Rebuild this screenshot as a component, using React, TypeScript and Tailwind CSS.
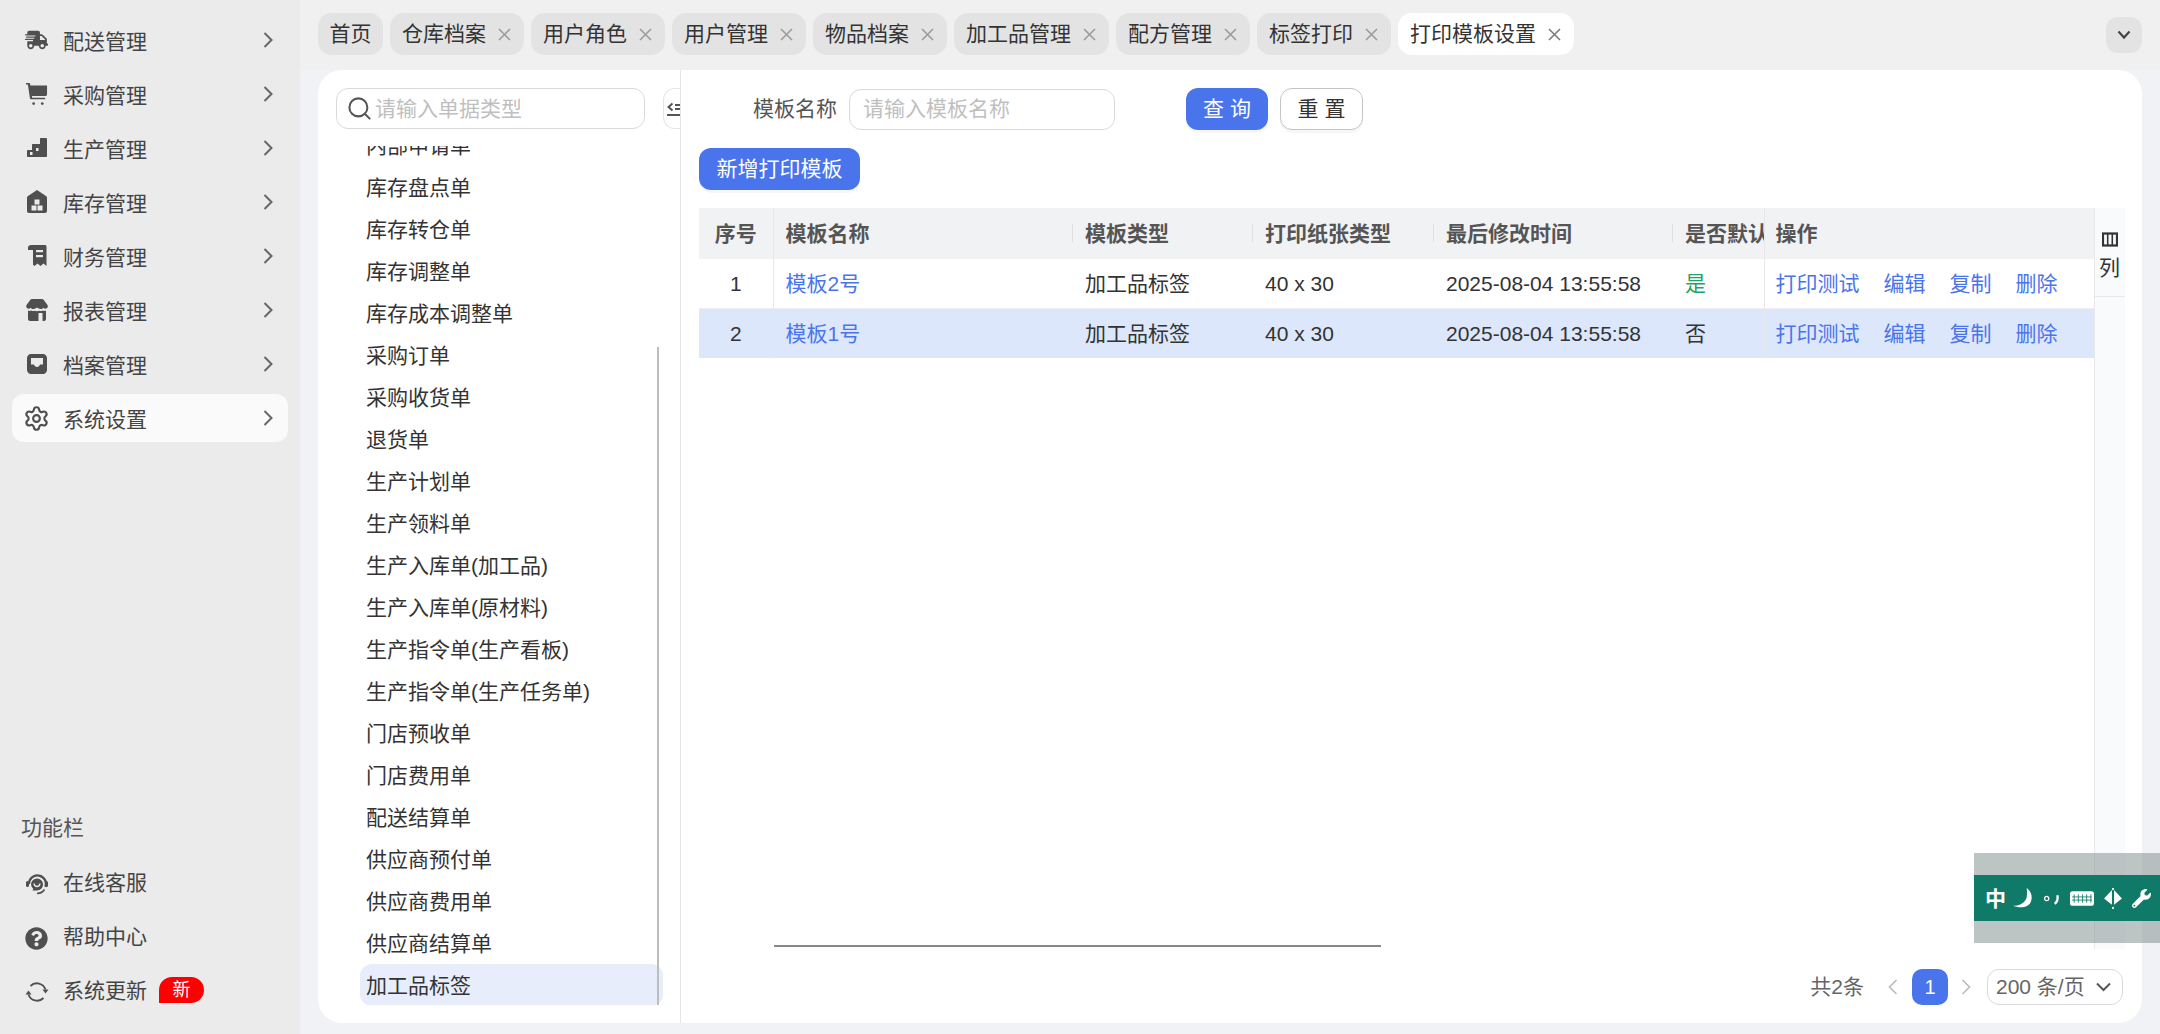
import React from 'react';
import { Search, Settings } from 'lucide-react';
import { FaShippingFast, FaQuestionCircle, FaWrench } from 'react-icons/fa';

const Chevron: React.FC = () => (
  <svg width="10" height="16" viewBox="0 0 10 16" fill="none" stroke="#666" strokeWidth="2">
    <path d="M1.5 1 8.5 8 1.5 15" />
  </svg>
);

const CloseX: React.FC<{ active?: boolean }> = ({ active }) => (
  <svg width="13" height="13" viewBox="0 0 13 13" fill="none" stroke={active ? '#777' : '#999'} strokeWidth="1.5">
    <path d="M1 1 12 12M12 1 1 12" />
  </svg>
);

const CartIcon = () => (
  <svg width="24" height="24" viewBox="0 0 24 24" fill="#4f4f4f">
    <path d="M1 0.5h3.2c.6 0 1 .4 1.1.9L5.6 3H23v9.5c0 .8-.6 1.5-1.4 1.5H7.2l.3 2H21v1.6H6.2c-.5 0-.9-.4-1-.9L3 2.2H1z" />
    <circle cx="9" cy="22" r="1.4" />
    <circle cx="18" cy="22" r="1.4" />
  </svg>
);

const StairsIcon = () => (
  <svg width="22" height="22" viewBox="0 0 22 22" fill="#4f4f4f">
    <path d="M15 1h5c.6 0 1 .4 1 1v17c0 .6-.4 1-1 1H2c-.6 0-1-.4-1-1v-5c0-.6.4-1 1-1h4V8c0-.6.4-1 1-1h7V2c0-.6.4-1 1-1z" />
    <rect x="4" y="15" width="2.5" height="3" fill="#ebebeb" />
    <rect x="10" y="11" width="2.5" height="3" fill="#ebebeb" />
  </svg>
);

const WarehouseIcon = () => (
  <svg width="22" height="24" viewBox="0 0 22 24" fill="#4f4f4f">
    <path d="M11 0 20 6c.7.4 1 1 1 1.8V21c0 1.2-.8 2-2 2H3c-1.200 0-2-.8-2-2V7.800C1 7 1.300 6.400 2 6z" />
    <rect x="8.500" y="9.500" width="5" height="5" fill="#ebebeb" />
    <rect x="5.500" y="15.500" width="5" height="5" fill="#ebebeb" />
    <rect x="11.500" y="15.500" width="5" height="5" fill="#ebebeb" />
  </svg>
);

const ReceiptIcon = () => (
  <svg width="22" height="24" viewBox="0 0 22 24" fill="#4f4f4f">
    <path d="M6 1h13c.8 0 1.500.7 1.500 1.500V22l-3-2.500-3 2.500-3-2.500-3 2.500-1.500-1.200V6H2V3.500C2 2 3.500 1 5 1z" />
    <rect x="10" y="6" width="7" height="2.200" fill="#ebebeb" />
    <rect x="10" y="11" width="7" height="2.200" fill="#ebebeb" />
  </svg>
);

const StoreIcon = () => (
  <svg width="22" height="24" viewBox="0 0 22 24" fill="#4f4f4f">
    <path d="M6 1h10c.6 0 1 .2 1.400.6L21.500 7c.6 1 .4 2-.2 2.800-1 1.200-3 1.200-4 0-.5.800-1.400 1.200-2.300 1.200s-2.200-.4-4-1.500c-1.800 1.100-3.100 1.500-4 1.500s-1.800-.4-2.300-1.200c-1 1.200-3 1.200-4 0C.1 9 0 8 .5 7L4.600 1.600C5 1.200 5.400 1 6 1z" />
    <path d="M2 12.500c1 .5 2.200.5 3.200 0 1 .6 2.500.8 3.800.2 1.300.6 2.700.6 4 0 1.300.6 2.800.4 3.800-.2 1 .5 2.200.5 3.200 0V21c0 1.100-.9 2-2 2H4c-1.100 0-2-.9-2-2z" />
    <rect x="12.500" y="15" width="4" height="8" fill="#ebebeb" />
  </svg>
);

const InboxIcon = () => (
  <svg width="22" height="22" viewBox="0 0 22 22" fill="#4f4f4f">
    <path d="M5 1h12c2.200 0 4 1.800 4 4v12c0 2.200-1.800 4-4 4H5c-2.200 0-4-1.800-4-4V5c0-2.200 1.800-4 4-4z" />
    <path d="M5 5h12v6.500h-3c-.4 1.600-1.600 2.500-3 2.500s-2.600-.9-3-2.500H5z" fill="#ebebeb" />
  </svg>
);

const HeadsetIcon = () => (
  <svg width="26" height="24" viewBox="0 0 26 24" fill="none" stroke="#4f4f4f">
    <path d="M5 12a8.500 8.500 0 1 1 16.500 2.800" strokeWidth="2.200" />
    <path d="M20.500 17.500c-1.500 2.500-4 3.800-7.500 4" strokeWidth="1.600" />
    <rect x="2" y="9" width="3" height="6" rx="1.500" fill="#4f4f4f" stroke="none" />
    <rect x="21" y="9" width="3" height="6" rx="1.500" fill="#4f4f4f" stroke="none" />
    <path d="M7 12.500a6 6 0 1 1 6 6H8.500l.8-1.800A6 6 0 0 1 7 12.500z" fill="#4f4f4f" stroke="none" />
    <path d="M10 11.500c.3 2 1.500 3 3 3s2.700-1 3-3" stroke="#ebebeb" strokeWidth="1.500" />
  </svg>
);

const UpdateIcon = () => (
  <svg width="26" height="24" viewBox="0 0 26 24" fill="none" stroke="#4f4f4f" strokeWidth="1.800">
    <path d="M6.500 6A9 9 0 0 1 21.500 9.500" />
    <path d="M19.500 18A9 9 0 0 1 4.500 14.500" />
    <path d="M18.500 9.500h6L21.500 13.500z" fill="#4f4f4f" stroke="none" />
    <path d="M1.500 14.500h6L4.500 10.500z" fill="#4f4f4f" stroke="none" />
  </svg>
);

const menus: { label: string; icon: React.ReactNode; active?: boolean }[] = [
  { label: '配送管理', icon: <FaShippingFast size={24} color="#4f4f4f" /> },
  { label: '采购管理', icon: <CartIcon /> },
  { label: '生产管理', icon: <StairsIcon /> },
  { label: '库存管理', icon: <WarehouseIcon /> },
  { label: '财务管理', icon: <ReceiptIcon /> },
  { label: '报表管理', icon: <StoreIcon /> },
  { label: '档案管理', icon: <InboxIcon /> },
  { label: '系统设置', icon: <Settings size={27} color="#4f4f4f" strokeWidth={1.9} className="shrink-0" />, active: true },
];

const tabs = ['仓库档案', '用户角色', '用户管理', '物品档案', '加工品管理', '配方管理', '标签打印'];

const billTypes = [
  '内部申请单',
  '库存盘点单',
  '库存转仓单',
  '库存调整单',
  '库存成本调整单',
  '采购订单',
  '采购收货单',
  '退货单',
  '生产计划单',
  '生产领料单',
  '生产入库单(加工品)',
  '生产入库单(原材料)',
  '生产指令单(生产看板)',
  '生产指令单(生产任务单)',
  '门店预收单',
  '门店费用单',
  '配送结算单',
  '供应商预付单',
  '供应商费用单',
  '供应商结算单',
  '加工品标签',
];

const rows = [
  { no: 1, name: '模板2号', isDefault: '是', selected: false },
  { no: 2, name: '模板1号', isDefault: '否', selected: true },
];

const headSep = "relative after:absolute after:right-0 after:top-[16px] after:h-[18px] after:w-px after:bg-[#dfdfdf]";

const App: React.FC = () => {
  return (
    <div className="relative flex h-[1034px] w-[2160px] overflow-hidden bg-[#f0f2f5] font-['Liberation_Sans','Noto_Sans_CJK_SC',sans-serif] text-[21px] text-[#333]">
      <aside className="flex w-[300px] shrink-0 flex-col justify-between bg-[#ebebeb] px-3 pb-[18px] pt-4 text-[#444]">
        <nav className="flex flex-col gap-[6px]">
          {menus.map((m) => (
            <div
              key={m.label}
              className={`flex h-[48px] items-center justify-between rounded-xl pl-[13px] pr-[15px] ${m.active ? 'bg-[#fafafa]' : ''}`}
            >
              <span className="flex items-center gap-[15px]">
                <span className="flex w-[23px] items-center justify-center">{m.icon}</span>
                <span className="pt-[3px]">{m.label}</span>
              </span>
              <Chevron />
            </div>
          ))}
        </nav>
        <div className="flex flex-col">
          <div className="mb-4 h-[30px] pl-[9px] text-[#555] leading-[28px]">功能栏</div>
          <div className="flex flex-col gap-[6px]">
            <div className="flex h-[48px] items-center gap-[13px] pl-[12px]">
              <HeadsetIcon />
              <span className="-mt-[2px]">在线客服</span>
            </div>
            <div className="flex h-[48px] items-center gap-[15px] pl-[13px]">
              <FaQuestionCircle size={23} color="#4f4f4f" />
              <span className="-mt-[2px]">帮助中心</span>
            </div>
            <div className="flex h-[48px] items-center gap-[13px] pl-[12px]">
              <UpdateIcon />
              <span className="-mt-[2px]">系统更新</span>
              <span className="-ml-[1px] -mt-[4px] flex h-[26px] w-[45px] items-center justify-center rounded-[13px] rounded-bl-none bg-[#ff0000] text-[18px] leading-none text-white">
                新
              </span>
            </div>
          </div>
        </div>
      </aside>

      <main className="flex min-w-0 flex-1 flex-col">
        <div className="flex h-[70px] shrink-0 bg-[#f0f0f0] pl-[18px] pr-[18px]">
          <div className="flex gap-[7px] pt-[13px]">
            <div className="flex h-[42px] w-[65px] items-center justify-center rounded-[14px] bg-[#e3e3e3]">首页</div>
            {tabs.map((t) => (
              <div key={t} className="flex h-[42px] items-center gap-[12px] rounded-[14px] bg-[#e3e3e3] pl-3 pr-[13px]">
                {t}
                <CloseX />
              </div>
            ))}
            <div className="flex h-[42px] items-center gap-[12px] rounded-[14px] bg-white pl-3 pr-[13px]">
              打印模板设置
              <CloseX active />
            </div>
          </div>
          <div className="ml-auto mt-[17px] flex h-[36px] w-[36px] items-center justify-center rounded-xl bg-[#e3e3e3]">
            <svg width="14" height="10" viewBox="0 0 14 10" fill="none" stroke="#444" strokeWidth="2.200">
              <path d="M1.500 1.500 7 7.500l5.500-6" />
            </svg>
          </div>
        </div>

        <div className="flex-1 px-[18px] pb-[11px]">
          <div className="flex h-full overflow-hidden rounded-[24px] bg-white">
            <section className="relative flex w-[363px] shrink-0 flex-col border-r border-[#e5e5e5] pt-[18px]">
              <div className="mx-[18px] flex h-[41px] w-[309px] items-center gap-[2px] rounded-xl border border-[#d9d9d9] pl-[9px]">
                <Search size={27} color="#555" strokeWidth={1.8} className="shrink-0" />
                <span className="text-[#bfbfbf]">请输入单据类型</span>
              </div>
              <div className="relative mt-[17px] h-[859px] overflow-hidden">
                <ul className="-mt-[22px] ml-[42px] w-[303px]">
                  {billTypes.map((b) => (
                    <li
                      key={b}
                      className={`flex h-[42px] items-center whitespace-nowrap rounded-xl pl-[6px] pt-[1px] ${b === '加工品标签' ? 'bg-[#e8edfb]' : ''}`}
                    >
                      {b}
                    </li>
                  ))}
                </ul>
                <div className="absolute left-[339px] top-[201px] h-[658px] w-[2px] bg-[#bdbdbd]" />
              </div>
              <div className="absolute right-0 top-[18px] flex h-[41px] w-[17px] items-center overflow-hidden rounded-l-xl border-y border-l border-[#e5e5e5] bg-white pl-[3px]">
                <svg width="18" height="18" viewBox="0 0 18 18" fill="none" stroke="#555" className="shrink-0">
                  <path d="M5.500 3.500 1.500 7l4 3.500" strokeWidth="2" />
                  <path d="M8 5h10M8 9h10" strokeWidth="1.800" />
                  <path d="M0 15h18" strokeWidth="2.200" />
                </svg>
              </div>
            </section>

            <section className="relative flex min-w-0 flex-1 flex-col pl-[18px] pr-[19px] pt-[18px]">
              <div className="flex h-[42px] items-center">
                <span className="ml-[54px] text-[#555]">模板名称</span>
                <span className="ml-[12px] flex h-[41px] w-[266px] items-center rounded-xl border border-[#d9d9d9] pl-[13px] text-[#bfbfbf]">
                  请输入模板名称
                </span>
                <button className="ml-[71px] h-[42px] w-[82px] rounded-xl bg-[#4a74ec] text-white shadow-[0_3px_0_rgba(0,0,0,0.03)]">
                  查 询
                </button>
                <button className="ml-[12px] h-[42px] w-[83px] rounded-xl border border-[#c4c4c4] bg-white text-[#333] shadow-[0_3px_0_rgba(0,0,0,0.03)]">
                  重 置
                </button>
              </div>
              <button className="mt-[18px] h-[42px] w-[161px] rounded-xl bg-[#4a74ec] text-white shadow-[0_3px_0_rgba(0,0,0,0.03)]">
                新增打印模板
              </button>

              <div className="mt-[18px] flex h-[741px]">
                <table className="h-fit w-[1395px] table-fixed border-collapse self-start">
                  <colgroup>
                    <col className="w-[74px]" />
                    <col className="w-[300px]" />
                    <col className="w-[180px]" />
                    <col className="w-[181px]" />
                    <col className="w-[239px]" />
                    <col className="w-[91px]" />
                    <col className="w-[330px]" />
                  </colgroup>
                  <thead>
                    <tr className="h-[51px] bg-[#f1f2f4] text-left font-bold text-[#555]">
                      <th className="border-r border-[#e8e8e8] text-center">序号</th>
                      <th className={`px-[12px] ${headSep}`}>模板名称</th>
                      <th className={`px-[12px] ${headSep}`}>模板类型</th>
                      <th className={`px-[12px] ${headSep}`}>打印纸张类型</th>
                      <th className={`px-[12px] ${headSep}`}>最后修改时间</th>
                      <th className="overflow-hidden whitespace-nowrap pl-[12px]">是否默认</th>
                      <th className="border-l border-[#e8e8e8] pl-[11px] pr-3">操作</th>
                    </tr>
                  </thead>
                  <tbody>
                    {rows.map((r) => (
                      <tr key={r.no} className={`${r.no === 1 ? 'h-[49px] border-b border-[#eeeeee]' : 'h-[50px]'} ${r.selected ? 'bg-[#dce7fb]' : ''}`}>
                        <td className="border-r border-[#e8e8e8] text-center">{r.no}</td>
                        <td className="px-[12px] text-[#4a74ec]">{r.name}</td>
                        <td className="px-[12px]">加工品标签</td>
                        <td className="px-[12px]">40 x 30</td>
                        <td className="whitespace-nowrap px-[12px]">2025-08-04 13:55:58</td>
                        <td className={`pl-[12px] ${r.isDefault === '是' ? 'text-[#1fa36a]' : ''}`}>{r.isDefault}</td>
                        <td className="border-l border-[#e8e8e8] pl-[11px] pr-3 text-[#4a74ec]">
                          <span className="flex gap-[24px] whitespace-nowrap">
                            <span>打印测试</span>
                            <span>编辑</span>
                            <span>复制</span>
                            <span>删除</span>
                          </span>
                        </td>
                      </tr>
                    ))}
                  </tbody>
                </table>
                <div className="w-[31px] shrink-0 border-l border-[#e8e8e8] bg-[#f9fafc]">
                  <div className="flex h-[89px] flex-col items-center border-b border-[#e8e8e8] pl-[1px] pr-[2px] pt-[24px]">
                    <svg width="16" height="15" viewBox="0 0 16 15" fill="none" stroke="#333" strokeWidth="2.200">
                      <rect x="1" y="1.500" width="14" height="12" />
                      <path d="M5.700 1.500v12M10.300 1.500v12" strokeWidth="1.600" />
                    </svg>
                    <span className="mt-[7px] leading-[28px]">列</span>
                  </div>
                </div>
              </div>

              <div className="mt-[20px] flex h-[36px] items-center justify-end text-[#666]">
                <span>共2条</span>
                <svg className="ml-[24px]" width="10" height="16" viewBox="0 0 10 16" fill="none" stroke="#bbb" strokeWidth="1.600">
                  <path d="M8.500 1 1.500 8l7 7" />
                </svg>
                <span className="ml-[14px] flex h-[36px] w-[36px] items-center justify-center rounded-[10px] bg-[#4a74ec] text-[20px] text-white">1</span>
                <svg className="ml-[13px]" width="10" height="16" viewBox="0 0 10 16" fill="none" stroke="#bbb" strokeWidth="1.600">
                  <path d="M1.500 1 8.500 8l-7 7" />
                </svg>
                <span className="ml-[16px] flex h-[36px] w-[136px] items-center justify-between rounded-xl border border-[#d9d9d9] pl-2 pr-[11px]">
                  200 条/页
                  <svg width="15" height="10" viewBox="0 0 15 10" fill="none" stroke="#555" strokeWidth="2">
                    <path d="M1 1.500 7.500 8 14 1.500" />
                  </svg>
                </span>
              </div>

              <div className="absolute left-[93px] top-[875px] h-[2px] w-[607px] bg-[#888]" />
            </section>
          </div>
        </div>
      </main>

      <div className="absolute left-[1974px] top-[853px] flex h-[90px] w-[186px] items-center bg-[#7b8a8a]/50">
        <div className="flex h-[46px] w-full items-center bg-[#0f7a68] pl-[11px] text-white">
          <span className="text-[21px] font-bold leading-none">中</span>
          <svg className="ml-[7px]" width="20" height="21" viewBox="0 0 19 20" fill="#fff">
            <path d="M13 0c4 3 6 8 4 13-2 5-9 7-17 4 5 0 11-2 13-8 .5-3 .5-6 0-9z" />
          </svg>
          <svg className="ml-[10px]" width="17" height="15" viewBox="0 0 15 14" fill="none" stroke="#fff">
            <circle cx="3" cy="7" r="2" strokeWidth="1.200" />
            <path d="M13 4c.6 3 0 6-2.500 8" strokeWidth="2.200" />
          </svg>
          <svg className="ml-[10px]" width="24" height="15" viewBox="0 0 23 14" fill="#fff">
            <rect width="23" height="14" rx="2.500" />
            <path d="M4 3v8M8 3v8M12 3v8M16 3v8M20 3v8M2 5.500h19M2 8.500h19" stroke="#0f7a68" strokeWidth="0.800" />
          </svg>
          <svg className="ml-[10px]" width="18" height="21" viewBox="0 0 17 20" fill="#fff">
            <path d="M7.500 2v14L0 10zM9.500 2 17 10l-7.500 6z" />
            <rect x="7.700" y="0" width="1.600" height="2" />
            <rect x="7.700" y="18" width="1.600" height="2" />
          </svg>
          <FaWrench className="ml-[10px]" size={19} />
        </div>
      </div>
    </div>
  );
};

export default App;
